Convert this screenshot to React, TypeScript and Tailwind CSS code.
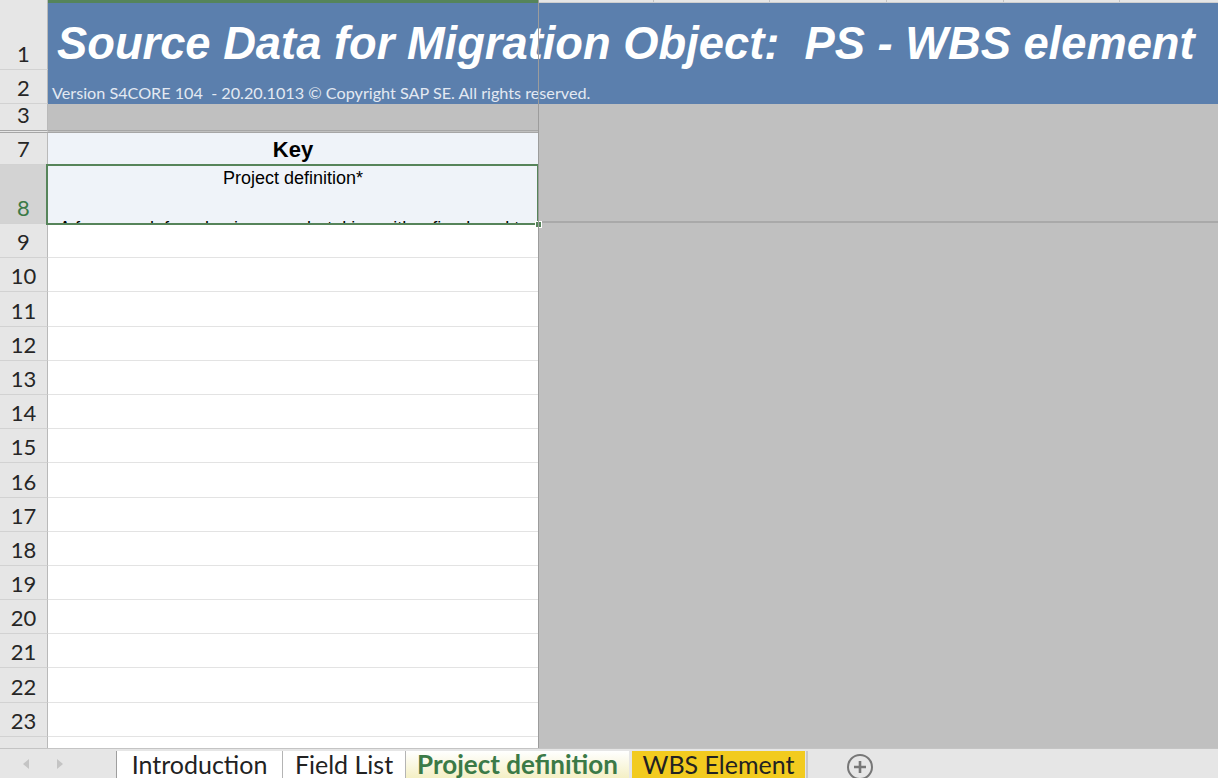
import React from "react";

const lato = "font-['Lato','Open_Sans',sans-serif]";
const arial = "font-['Liberation_Sans',Arial,sans-serif]";

function RowHead({ n, h, active = false, dbl = false }: { n: number; h: string; active?: boolean; dbl?: boolean }) {
  return (
    <div
      className={`w-[48px] shrink-0 ${h} ${active ? "bg-[#d3d3d3] text-[#3b7a47]" : "bg-[#e6e6e6] text-[#262626]"} border-r border-r-[#b9b9b9] ${dbl ? "border-b-[3px] border-double border-b-[#a6a6a6]" : "border-b border-b-[#d2d2d2]"} flex items-end justify-center pb-[2px] text-[22px] leading-[26px] ${lato}`}
    >
      {n}
    </div>
  );
}

const lowerRows = Array.from({ length: 16 }, (_, i) => 9 + i);

export default function App() {
  return (
    <div className="relative w-[1222px] h-[778px] overflow-hidden bg-white">
      <div className="w-[1218px] h-[748px] overflow-hidden flex flex-col">
        {/* column header strip */}
        <div className="flex h-[3px] shrink-0">
          <div className="w-[48px] bg-[#e6e6e6] border-r border-[#b9b9b9]" />
          <div className="w-[490px] bg-[#55845a]" />
          <div className="flex-1 flex bg-[#e6e6e6] border-b border-[#cfcfcf]">
            <div className="w-[116px] border-r border-[#c4c4c4]" />
            <div className="w-[116px] border-r border-[#c4c4c4]" />
            <div className="w-[117px] border-r border-[#c4c4c4]" />
            <div className="w-[117px] border-r border-[#c4c4c4]" />
            <div className="w-[116px] border-r border-[#c4c4c4]" />
          </div>
        </div>

        {/* row 1 */}
        <div className="flex h-[67px] shrink-0">
          <RowHead n={1} h="h-[67px]" />
          <div className="flex-1 min-w-0 bg-[#5b7fad] pl-[9px] pt-[15px]">
            <div className={`${arial} text-[45.3px] leading-[normal] font-bold italic text-white whitespace-pre`}>
              {"Source Data for Migration Object:  PS - WBS element"}
            </div>
          </div>
        </div>

        {/* row 2 */}
        <div className="flex h-[34px] shrink-0">
          <RowHead n={2} h="h-[34px]" />
          <div className="flex-1 min-w-0 bg-[#5b7fad] pl-[4px] flex items-end pb-[2px]">
            <div className={`${lato} text-[16.2px] leading-[normal] text-[#e3e9f2] whitespace-pre`}>
              {"Version S4CORE 104  - 20.20.1013 © Copyright SAP SE. All rights reserved."}
            </div>
          </div>
        </div>

        {/* lower area */}
        <div className="flex flex-1 min-h-0">
          <div className="w-[538px] shrink-0 flex flex-col">
            {/* row 3 (rows 4-6 hidden) */}
            <div className="flex h-[29px] shrink-0">
              <RowHead n={3} h="h-[29px]" dbl />
              <div className="w-[490px] bg-[#c0c0c0] border-b-[3px] border-double border-[#a6a6a6]" />
            </div>
            {/* row 7 */}
            <div className="flex h-[32px] shrink-0">
              <RowHead n={7} h="h-[32px]" />
              <div className={`w-[490px] bg-[#eff3f9] flex items-center justify-center ${arial} font-bold text-[22px] text-black pt-[1px]`}>
                Key
              </div>
            </div>
            {/* row 8 */}
            <div className="flex h-[59px] shrink-0">
              <RowHead n={8} h="h-[59px]" active />
              <div className="relative w-[490px] bg-[#eff3f9]">
                <div className={`h-full w-full overflow-hidden ${arial} text-[18px] leading-[21px] text-black`}>
                  <div className="text-center pt-[3px]">Project definition*</div>
                  <div className="pl-[11px] pt-[29px] whitespace-nowrap">
                    A framework for a business undertaking with a fixed goal to be achieved
                  </div>
                </div>
                <div className="absolute -left-[2px] -top-[1px] -right-[1px] -bottom-[1px] border-2 border-[#56845a] pointer-events-none" />
                <div className="absolute -right-[4px] -bottom-[4px] w-[7px] h-[7px] bg-[#56845a] border border-white" />
              </div>
            </div>
            {/* rows 9.. */}
            {lowerRows.map((n) => (
              <div key={n} className="flex h-[34.2px] shrink-0">
                <RowHead n={n} h="h-[34.2px]" />
                <div className="w-[490px] bg-white border-b border-[#e3e3e3]" />
              </div>
            ))}
          </div>
          {/* gray unused area */}
          <div className="flex-1 bg-[#c0c0c0]">
            <div className="h-[119px] border-b-2 border-[#a9a9a9]" />
          </div>
        </div>
      </div>

      {/* freeze pane vertical line */}
      <div className="absolute left-[538px] top-0 w-[1px] h-[748px] bg-[#9c9c9c]" />

      {/* sheet tab bar */}
      <div className="absolute left-0 top-[748px] w-[1218px] h-[30px] bg-[#e6e6e6] border-t border-[#c4c4c4] flex items-start">
        <div className="w-[116px] h-full flex items-center shrink-0">
          <svg width="8" height="12" viewBox="0 0 8 12" className="ml-[22px]">
            <path d="M7 1 L1 6 L7 11 Z" fill="#c4c4c4" />
          </svg>
          <svg width="8" height="12" viewBox="0 0 8 12" className="ml-[26px]">
            <path d="M1 1 L7 6 L1 11 Z" fill="#c4c4c4" />
          </svg>
        </div>
        <div className={`mt-[2px] h-[28px] w-[167px] shrink-0 bg-white border-l border-[#9e9e9e] border-r border-r-[#b4b4b4] flex justify-center ${lato} text-[25px] leading-[26px] text-[#222]`}>
          Introduction
        </div>
        <div className={`mt-[2px] h-[28px] w-[123px] shrink-0 bg-white border-r border-[#b4b4b4] flex justify-center ${lato} text-[25px] leading-[26px] text-[#222]`}>
          Field List
        </div>
        <div className={`mt-[2px] h-[28px] w-[223px] shrink-0 bg-gradient-to-b from-white to-[#f4efc2] flex justify-center ${lato} font-bold text-[26px] leading-[26px] text-[#3b7a47]`}>
          Project definition
        </div>
        <div className="mt-[2px] h-[28px] w-[3px] shrink-0 bg-[#e6e6e6]" />
        <div className={`mt-[2px] h-[28px] w-[173px] shrink-0 bg-[#f2cb1f] flex justify-center ${lato} text-[25px] leading-[26px] text-[#222]`}>
          WBS Element
        </div>
        <div className="mt-[2px] h-[28px] w-[2px] shrink-0 ml-[1px] bg-[#c8c8c8]" />
        <div className="ml-[38px] mt-[4px]">
          <svg width="28" height="28" viewBox="0 0 28 28">
            <circle cx="14" cy="14" r="12" fill="none" stroke="#777" strokeWidth="2" />
            <path d="M14 8 V20 M8 14 H20" stroke="#777" strokeWidth="2.6" />
          </svg>
        </div>
      </div>
    </div>
  );
}
